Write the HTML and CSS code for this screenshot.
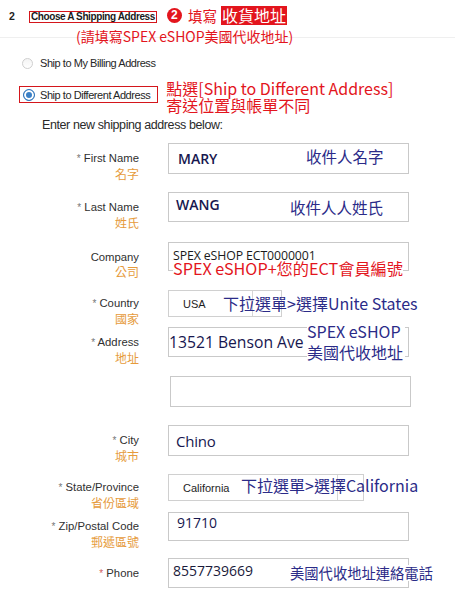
FILE: index.html
```html
<!DOCTYPE html>
<html lang="zh-Hant">
<head>
<meta charset="utf-8">
<title>Choose A Shipping Address</title>
<link rel="stylesheet" href="styles.css">
</head>
<body>
<div class="top">
  <span class="step">2</span>
  <span class="title-box">Choose A Shipping Address</span>
  <span class="num">2</span>
  <span class="fill">填寫</span>
  <span class="hl">收貨地址</span>
  <div class="sub">(請填寫SPEX eSHOP美國代收地址)</div>
</div>

<div class="opts">
  <div class="opt">
    <span class="radio"></span>
    <span>Ship to My Billing Address</span>
  </div>
  <div class="opt2">
    <div class="sel-box">
      <span class="radio on"></span>
      <span>Ship to Different Address</span>
    </div>
    <div class="note">點選[Ship to Different Address]<br>寄送位置與帳單不同</div>
  </div>
  <div class="enter">Enter new shipping address below:</div>
</div>

<div class="form">
  <div class="row r1">
    <div class="lab"><div><span class="ast">*</span> First Name</div><div class="zh">名字</div></div>
    <div class="fld pl10"><span class="val strong">MARY</span><span class="ann a-first">收件人名字</span></div>
  </div>
  <div class="row r2">
    <div class="lab"><div><span class="ast">*</span> Last Name</div><div class="zh">姓氏</div></div>
    <div class="fld pl8 up"><span class="val strong">WANG</span><span class="ann a-last">收件人人姓氏</span></div>
  </div>
  <div class="row r3">
    <div class="lab"><div>Company</div><div class="zh">公司</div></div>
    <div class="fld pl5 top-al"><span class="val small">SPEX eSHOP ECT0000001</span><span class="ann red a-company">SPEX eSHOP+您的ECT會員編號</span></div>
  </div>
  <div class="row sel r4">
    <div class="lab"><div><span class="ast">*</span> Country</div><div class="zh">國家</div></div>
    <div class="fld select w-country"><span class="opt-val">USA</span><span class="arrow"></span><span class="ann a-country">下拉選單&gt;選擇Unite States</span></div>
  </div>
  <div class="row r5">
    <div class="lab"><div><span class="ast">*</span> Address</div><div class="zh">地址</div></div>
    <div class="fld pl0"><span class="val big addr">13521 Benson Ave</span><span class="ann a-address">SPEX eSHOP<br>美國代收地址</span></div>
  </div>
  <div class="row r6">
    <div class="lab"></div>
    <div class="fld shift"></div>
  </div>
  <div class="row r7">
    <div class="lab"><div><span class="ast">*</span> City</div><div class="zh">城市</div></div>
    <div class="fld pl8"><span class="val big">Chino</span></div>
  </div>
  <div class="row sel r8">
    <div class="lab"><div><span class="ast">*</span> State/Province</div><div class="zh">省份區域</div></div>
    <div class="fld select w-state"><span class="opt-val">California</span><span class="arrow"></span><span class="ann a-state">下拉選單&gt;選擇California</span></div>
  </div>
  <div class="row r9">
    <div class="lab"><div><span class="ast">*</span> Zip/Postal Code</div><div class="zh">郵遞區號</div></div>
    <div class="fld pl9 up2"><span class="val mid">91710</span></div>
  </div>
  <div class="row r10">
    <div class="lab"><div><span class="ast red-ast">*</span> Phone</div></div>
    <div class="fld pl5 up"><span class="val mid dark">8557739669</span><span class="ann a-phone">美國代收地址連絡電話</span></div>
  </div>
</div>
</body>
</html>
```

FILE: styles.css
```css
html, body {
  margin: 0;
  padding: 0;
  background: #ffffff;
}
body {
  width: 455px;
  height: 600px;
  overflow: hidden;
  font-family: "Liberation Sans", Arial, sans-serif;
  color: #2b2b2b;
}

/* ---------- header ---------- */
.top {
  position: relative;
  height: 38px;
  box-sizing: border-box;
  padding-bottom: 6px;
  border-bottom: 1px solid #efefef;
  display: flex;
  align-items: center;
}
.step {
  margin-left: 9px;
  width: 20px;
  font-weight: bold;
  font-size: 10.5px;
  color: #222;
}
.title-box {
  border: 1px solid #d4161c;
  padding: 0 1px;
  height: 12px;
  box-sizing: border-box;
  font-weight: bold;
  font-size: 10px;
  letter-spacing: -0.4px;
  line-height: 10px;
  color: #1a1a1a;
  white-space: nowrap;
  margin-top: 3px;
}
.num {
  margin-left: 10px;
  width: 15px;
  height: 15px;
  border-radius: 50%;
  background: #e3151d;
  color: #fff;
  font-weight: bold;
  font-size: 12px;
  line-height: 15px;
  text-align: center;
}
.fill {
  margin-left: 6px;
  font-family: "Noto Sans CJK TC", sans-serif;
  font-size: 14.5px;
  line-height: 18px;
  color: #e3151d;
}
.hl {
  margin-left: 4px;
  background: #e3151d;
  color: #fff;
  font-family: "Noto Sans CJK TC", sans-serif;
  font-size: 16px;
  line-height: 19px;
  padding: 0 1px;
}
.sub {
  position: absolute;
  left: 76px;
  top: 27px;
  font-family: "Noto Sans CJK TC", sans-serif;
  font-size: 14px;
  line-height: 18px;
  color: #e3151d;
  white-space: nowrap;
}

/* ---------- shipping options ---------- */
.opts {
  padding-top: 18px;
  font-size: 11px;
  letter-spacing: -0.45px;
  color: #262626;
}
.opt {
  display: flex;
  align-items: center;
  height: 14px;
  margin-left: 22px;
  gap: 7px;
}
.radio {
  width: 11px;
  height: 11px;
  border-radius: 50%;
  border: 1px solid #cfcfcf;
  box-sizing: border-box;
  background: linear-gradient(#f4f4f4, #ffffff);
  flex: none;
}
.radio.on {
  width: 12px;
  height: 12px;
  border: 1px solid #2f74b9;
  background: #3b80c6;
  box-shadow: inset 0 0 0 2px #ffffff;
}
.opt2 {
  display: flex;
  align-items: flex-start;
  margin-top: 10px;
}
.sel-box {
  margin-left: 19px;
  margin-top: 6px;
  height: 17px;
  box-sizing: border-box;
  border: 1px solid #d4161c;
  display: flex;
  align-items: center;
  gap: 5px;
  padding: 0 7px 0 3px;
  white-space: nowrap;
}
.note {
  margin-left: 8px;
  font-family: "Noto Sans CJK TC", sans-serif;
  font-size: 16px;
  letter-spacing: 0;
  line-height: 17px;
  color: #e3151d;
  white-space: nowrap;
}
.enter {
  margin-left: 42px;
  margin-top: 3px;
  font-size: 12.5px;
  letter-spacing: -0.4px;
  line-height: 16px;
  color: #2a2a2a;
}

/* ---------- form ---------- */
.form {
  margin-top: 10px;
}
.row {
  display: flex;
  height: 30px;
  margin-bottom: 19px;
}
.row.r1 { height: 31px; margin-bottom: 18px; }
.row.r2 { margin-bottom: 20px; }
.row.r3 { height: 29px; }
.row.sel { height: 27px; margin-bottom: 10px; }
.row.r6 { height: 31px; margin-bottom: 18px; }
.row.r7 { height: 31px; margin-bottom: 18px; }
.row.r8 { margin-bottom: 11px; }
.row.r9 { height: 29px; margin-bottom: 17px; }

.lab {
  width: 139px;
  flex: none;
  box-sizing: border-box;
  padding-top: 8px;
  text-align: right;
  font-size: 11.3px;
  line-height: 14px;
  color: #303030;
  white-space: nowrap;
}
.row.sel .lab { padding-top: 6px; }
.row.r9 .lab { padding-top: 7px; }
.ast {
  color: #777;
  font-size: 10px;
}
.red-ast { color: #d06060; }
.zh {
  font-family: "Noto Sans CJK TC", sans-serif;
  font-size: 12px;
  line-height: 15px;
  color: #e69b3c;
}

.fld {
  position: relative;
  margin-left: 29px;
  width: 241px;
  height: 100%;
  box-sizing: border-box;
  border: 1px solid #c9c9c9;
  display: flex;
  align-items: center;
  white-space: nowrap;
}
.fld.shift { margin-left: 31px; }
.pl0 { padding-left: 0; }
.pl5 { padding-left: 4px; }
.pl8 { padding-left: 7px; }
.pl9 { padding-left: 8px; }
.pl10 { padding-left: 9px; }
.up { padding-bottom: 5px; }
.up2 { padding-bottom: 8px; }
.top-al { align-items: flex-start; padding-top: 6px; }

.val {
  font-family: "Open Sans", "Liberation Sans", sans-serif;
  color: #17174f;
}
.val.strong { font-size: 14px; font-weight: 600; }
.val.small { font-size: 12.3px; color: #1a1a1a; line-height: 13px; letter-spacing: -0.1px; }
.val.big { font-size: 15px; font-weight: 500; letter-spacing: -0.2px; background: #fff; }
.val.big.addr { font-size: 15.7px; letter-spacing: 0; }
.val.mid { font-size: 14px; }
.val.dark { color: #1a1a3a; }

.select {
  padding: 0;
  align-items: stretch;
  border-color: #d0d0d0;
}
.w-country { width: 114px; }
.w-state { width: 196px; }
.opt-val {
  flex: 1;
  display: flex;
  align-items: center;
  padding-left: 14px;
  font-size: 11px;
  color: #1e1e1e;
}
.arrow {
  width: 28px;
  flex: none;
  border-left: 1px solid #d6d6d6;
}
.w-state .arrow { width: 25px; }

/* ---------- overlay annotations ---------- */
.ann {
  position: absolute;
  font-family: "Noto Sans CJK TC", sans-serif;
  color: #2b2b88;
  line-height: 1.15;
  white-space: nowrap;
}
.ann.red { color: #e3151d; background: #fff; }
.a-first { left: 137px; top: 4px; font-size: 15.5px; }
.a-last { left: 121px; top: 6px; font-size: 15.5px; }
.a-company { left: 4px; top: 17px; font-size: 16.2px; line-height: 17px; }
.a-country { left: 54px; top: 3px; font-size: 16px; }
.a-address { left: 138px; top: -7px; font-size: 16px; line-height: 21px; background: #fff; padding-right: 2px; }
.a-state { left: 72px; top: 1px; font-size: 16px; }
.a-phone { left: 121px; top: 6px; font-size: 14.3px; background: #fff; }
```
